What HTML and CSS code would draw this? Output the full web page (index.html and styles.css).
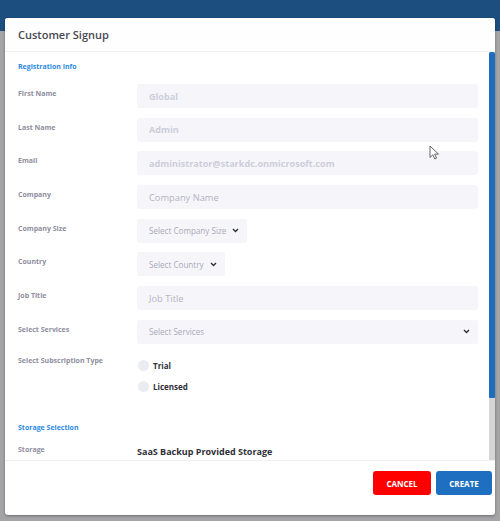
FILE: index.html
```html
<!DOCTYPE html>
<html>
<head>
<meta charset="utf-8">
<link rel="stylesheet" href="styles.css">
</head>
<body>
<div class="page">
  <div class="modal">
    <div class="modal-header">Customer Signup</div>
    <div class="modal-body">
      <div class="content">
        <div class="section-title">Registration Info</div>
        <div class="rows">
          <div class="row"><div class="label">First Name</div><div class="field input disabled">Global</div></div>
          <div class="row"><div class="label">Last Name</div><div class="field input disabled">Admin</div></div>
          <div class="row"><div class="label">Email</div><div class="field input disabled">administrator@starkdc.onmicrosoft.com</div></div>
          <div class="row"><div class="label">Company</div><div class="field input">Company Name</div></div>
          <div class="row"><div class="label">Company Size</div><div class="field select w-size"><span>Select Company Size</span><svg class="chev" viewBox="0 0 8 6" width="7" height="5"><path d="M1 1.2l3 3 3-3" fill="none" stroke="#2c2c35" stroke-width="1.6"/></svg></div></div>
          <div class="row"><div class="label">Country</div><div class="field select w-country"><span>Select Country</span><svg class="chev" viewBox="0 0 8 6" width="7" height="5"><path d="M1 1.2l3 3 3-3" fill="none" stroke="#2c2c35" stroke-width="1.6"/></svg></div></div>
          <div class="row"><div class="label">Job Title</div><div class="field input">Job Title</div></div>
          <div class="row"><div class="label">Select Services</div><div class="field select"><span>Select Services</span><svg class="chev" viewBox="0 0 8 6" width="7" height="5"><path d="M1 1.2l3 3 3-3" fill="none" stroke="#2c2c35" stroke-width="1.6"/></svg></div></div>
        </div>
        <div class="row sub-row">
          <div class="label">Select Subscription Type</div>
          <div class="radios">
            <div class="radio"><span class="circle"></span><span>Trial</span></div>
            <div class="radio"><span class="circle"></span><span>Licensed</span></div>
          </div>
        </div>
        <div class="section-title storage-title">Storage Selection</div>
        <div class="row storage-row"><div class="label">Storage</div><div class="storage-value">SaaS Backup Provided Storage</div></div>
      </div>
      <div class="scrollbar"><div class="thumb"></div></div>
    </div>
    <div class="modal-footer">
      <button class="btn cancel">CANCEL</button>
      <button class="btn create">CREATE</button>
    </div>
  </div>
  <svg class="cursor" viewBox="0 0 10 15" width="10" height="15"><path d="M1 1v11.5l2.8-2.7 2 4.2 1.8-.8-2-4.1h3.9z" fill="#fff" stroke="#555" stroke-width="0.9" stroke-linejoin="round"/></svg>
</div>
</body>
</html>
```

FILE: styles.css
```css
* { box-sizing: border-box; }
html, body { margin: 0; padding: 0; }
body {
  width: 500px;
  height: 521px;
  overflow: hidden;
  font-family: "Open Sans", "Liberation Sans", sans-serif;
  background: linear-gradient(#1c4e80 0, #1c4e80 31px, #a5a5a7 31px);
}
.page {
  position: relative;
  padding: 18px 5px 0 5px;
  height: 521px;
}
.modal {
  width: 490px;
  height: 497px;
  background: #fff;
  border-radius: 3px;
  box-shadow: 0 1px 3px rgba(0,0,0,0.35);
  display: flex;
  flex-direction: column;
  overflow: hidden;
}
.modal-header {
  height: 34px;
  flex: none;
  padding-left: 13px;
  display: flex;
  align-items: center;
  font-size: 11px;
  font-weight: 600;
  color: #474750;
  border-bottom: 1px solid #f1f1f4;
  background: #fefefe;
}
.modal-body {
  position: relative;
  height: 408px;
  flex: none;
  overflow: hidden;
}
.content {
  padding: 9px 0 0 13px;
}
.section-title {
  font-size: 7px;
  line-height: 12px;
  font-weight: 700;
  color: #2b8ae2;
}
.rows {
  margin-top: 11px;
  display: flex;
  flex-direction: column;
  gap: 9.7px;
}
.row {
  display: flex;
  align-items: flex-start;
}
.label {
  width: 119px;
  flex: none;
  padding-top: 5px;
  font-size: 7px;
  line-height: 10px;
  font-weight: 700;
  color: #8e8e9e;
}
.field {
  height: 24px;
  background: #f6f6fa;
  border-radius: 3px;
  display: flex;
  align-items: center;
  padding-left: 12px;
}
.input {
  width: 341px;
  font-size: 9.3px;
  color: #b4b4c4;
}
.input.disabled {
  font-size: 9.1px;
  font-weight: 700;
  color: #cdcdda;
}
.select {
  width: 341px;
  font-size: 8.1px;
  color: #a9a9b8;
  justify-content: space-between;
  padding-right: 8px;
}
.select.w-size { width: 110px; }
.select.w-country { width: 88px; }
.chev { display: block; }
.sub-row {
  margin-top: 7px;
}
.radios {
  padding-top: 4.5px;
  display: flex;
  flex-direction: column;
}
.radio {
  height: 21px;
  display: flex;
  align-items: center;
  gap: 4px;
  font-size: 8px;
  font-weight: 700;
  color: #2f2f38;
  padding-left: 1px;
}
.circle {
  width: 11px;
  height: 11px;
  border-radius: 50%;
  background: #ebebf2;
}
.storage-title {
  margin-top: 25px;
}
.storage-row {
  margin-top: 10px;
  height: 14px;
}
.storage-row .label {
  padding-top: 1px;
}
.storage-value {
  font-size: 9px;
  line-height: 14px;
  font-weight: 700;
  color: #2f2f38;
  padding-top: 1px;
}
.scrollbar {
  position: absolute;
  top: 0;
  right: 0;
  width: 6px;
  height: 408px;
  background: #d6d6d8;
}
.thumb {
  height: 346px;
  background: #1f6dbf;
  border-radius: 2px 2px 1px 1px;
}
.modal-footer {
  flex: 1;
  border-top: 1px solid #f0f0f2;
  display: flex;
  justify-content: flex-end;
  align-items: flex-start;
  gap: 5px;
  padding: 10px 3px 0 0;
}
.btn {
  height: 24px;
  border: none;
  border-radius: 3px;
  font-family: "Open Sans", "Liberation Sans", sans-serif;
  font-size: 8px;
  font-weight: 700;
  color: #fff;
  padding: 0;
}
.cancel { width: 58px; background: #ff0000; }
.create { width: 56px; background: #1f6fc0; }
.cursor {
  position: absolute;
  left: 429px;
  top: 145px;
}
```
